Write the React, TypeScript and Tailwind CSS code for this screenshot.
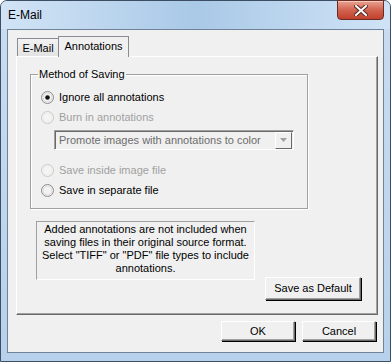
import type { ReactNode } from 'react'

function Radio({ checked = false, disabled = false }: { checked?: boolean; disabled?: boolean }) {
  return (
    <svg width="13" height="13" viewBox="0 0 13 13" className="shrink-0">
      <circle cx="6.5" cy="6.5" r="6" fill={disabled ? '#f4f4f4' : '#f2f2f2'} stroke={disabled ? '#c9c9c9' : '#8c8c8c'} />
      <circle cx="6.5" cy="6.5" r="4.5" fill="none" stroke={disabled ? '#ececec' : '#d9d9d9'} />
      {checked && <circle cx="6.5" cy="6.5" r="2.3" fill="#111" />}
    </svg>
  )
}

function Option({ children, checked, disabled }: { children: ReactNode; checked?: boolean; disabled?: boolean }) {
  return (
    <div className="flex items-center h-[14px] gap-[5px] pl-[10px]">
      <Radio checked={checked} disabled={disabled} />
      <span className={disabled ? 'text-[#a0a0a0]' : 'text-black'}>{children}</span>
    </div>
  )
}

function Button({ children, className }: { children: ReactNode; className: string }) {
  return (
    <button
      className={
        'flex items-center justify-center bg-[#f0f0f0] text-black border border-t-white border-l-white border-r-[#696969] border-b-[#696969] shadow-[inset_-1px_-1px_0_#a0a0a0,1px_1px_0_#000] ' +
        className
      }
    >
      {children}
    </button>
  )
}

export default function App() {
  return (
    <div
      className="w-[391px] h-[362px] flex flex-col border border-[#3d4e62] rounded-t-[7px] bg-gradient-to-b from-[#c9ddf1] to-[#b7d1ec] text-[11px] leading-[13px]"
      style={{ fontFamily: '"Liberation Sans", Arial, sans-serif' }}
    >
      {/* Title bar */}
      <div className="h-[28px] flex justify-between rounded-t-[6px] bg-gradient-to-r from-[#d2e4f6] via-[#a9c9e7] to-[#d0e3f6]">
        <span className="pl-[7px] pt-[7px] text-[12px] text-black leading-[14px]">E-Mail</span>
        <div className="mr-[6px] -mt-px w-[47px] h-[20px] flex items-center justify-center rounded-b-[4px] border border-[#6b2b22] bg-gradient-to-b from-[#e9a392] via-[#d1634f] to-[#c0412c] shadow-[inset_0_1px_0_#f6c9bd]">
          <svg width="14" height="11" viewBox="0 0 14 11">
            <path d="M2 1 L12 10 M12 1 L2 10" stroke="#5a2a23" strokeWidth="4" strokeLinecap="square" />
            <path d="M2 1 L12 10 M12 1 L2 10" stroke="#fff" strokeWidth="2" strokeLinecap="square" />
          </svg>
        </div>
      </div>

      {/* Client area */}
      <div className="flex-1 mx-[6px] mb-[8px] border border-[#6f8297] bg-[#f0f0f0] flex flex-col">
        {/* Tabs */}
        <div className="flex items-end h-[20px] mt-[6px] pl-[9px]">
          <div className="h-[18px] w-[42px] flex items-center justify-center border border-b-0 border-[#898c95] bg-gradient-to-b from-[#f2f2f2] to-[#e3e3e3] text-black pt-px">
            E-Mail
          </div>
          <div className="relative z-10 -ml-[1px] -mb-px h-[21px] w-[71px] flex items-center justify-center border border-b-0 border-[#898c95] bg-[#f0f0f0] text-black pb-[2px]">
            Annotations
          </div>
        </div>

        {/* Tab panel */}
        <div className="h-[259px] ml-[8px] mr-[5px] pl-[13px] pt-[18px] border border-t-white border-l-white border-r-[#696969] border-b-[#696969] shadow-[inset_-1px_-1px_0_#a0a0a0] flex flex-col">
          {/* Group box */}
          <fieldset className="w-[278px] h-[141px] -mt-[7px] border border-[#a0a0a0] shadow-[1px_1px_0_#fff,inset_1px_1px_0_#fff] px-0 pb-0">
            <legend className="ml-[7px] px-[1px] text-black leading-[13px]">Method of Saving</legend>
            <div className="flex flex-col pt-[9px]">
              <Option checked>Ignore all annotations</Option>
              <div className="h-[6px]" />
              <Option disabled>Burn in annotations</Option>
              <div className="ml-[23px] mt-[6px] w-[240px] h-[20px] flex items-center border border-t-[#a0a0a0] border-l-[#a0a0a0] border-r-white border-b-white shadow-[inset_1px_1px_0_#696969]">
                <span className="pl-[4px] flex-1 text-[#6d6d6d]">Promote images with annotations to color</span>
                <div className="w-[17px] h-[17px] mr-px flex items-center justify-center border border-t-white border-l-white border-r-[#696969] border-b-[#696969] bg-[#f0f0f0]">
                  <svg width="7" height="4" viewBox="0 0 7 4">
                    <path d="M0 0 H7 L3.5 4 Z" fill="#a0a0a0" />
                  </svg>
                </div>
              </div>
              <div className="h-[13px]" />
              <Option disabled>Save inside image file</Option>
              <div className="h-[6px]" />
              <Option>Save in separate file</Option>
            </div>
          </fieldset>

          {/* Info box + default button */}
          <div className="flex items-start mt-[12px] ml-[6px]">
            <div className="w-[219px] h-[59px] border border-t-[#a0a0a0] border-l-[#a0a0a0] border-r-white border-b-white pt-[1px] text-center text-black">
              Added annotations are not included when saving files in their original source format. Select "TIFF" or "PDF" file types to include annotations.
            </div>
            <Button className="ml-[10px] mt-[56px] w-[96px] h-[23px]">Save as Default</Button>
          </div>
        </div>

        {/* Dialog buttons */}
        <div className="flex justify-end gap-[7px] mt-[6px] pr-[7px]">
          <Button className="w-[74px] h-[20px]">OK</Button>
          <Button className="w-[74px] h-[20px]">Cancel</Button>
        </div>
      </div>
    </div>
  )
}
